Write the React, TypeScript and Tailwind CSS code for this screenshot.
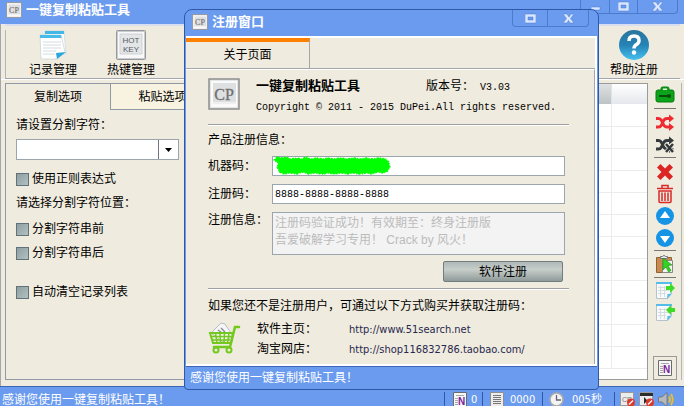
import { useState } from "react";
import type { ReactNode } from "react";
import { clsx } from "clsx";

const rows = Array.from({ length: 12 }, (_, i) => i);

export default function App() {
  const [tab, setTab] = useState("copy");

  return (
    <div className="relative flex min-h-screen flex-col overflow-hidden bg-[#6b9bee] font-['Liberation_Sans','Noto_Sans_CJK_SC',sans-serif] text-xs leading-4 text-black">
      {/* Main window title bar */}
      <header className="flex h-6 items-start justify-between pl-1.5">
        <div className="flex items-center gap-1 pt-0.5">
          <CpLogo className="size-4" />
          <h1 className="text-[13px] font-bold text-white">一键复制粘贴工具</h1>
        </div>
        <div className="mr-1.5 flex h-3.5 rounded-b border border-t-0 border-[#4c7bcb]">
          <WinButton label="最小化" className="w-7">
            <path d="M1 6h9v3H1z" />
          </WinButton>
          <WinButton label="最大化" className="w-7 border-l">
            <path fillRule="evenodd" d="M0 1h11v9H0zM3 4v3h5V4z" />
          </WinButton>
          <WinButton label="关闭" className="w-10 border-l">
            <path d="M0 1h4l2 3 2-3h3L7.500 5.500 11 10H7L5.500 7.500 4 10H0l3.500-4.500z" />
          </WinButton>
        </div>
      </header>

      <main className="flex flex-1 flex-col border-l border-[#a5a5ad] bg-[#efebde]">
        {/* Toolbar */}
        <nav className="mx-1 flex h-[55px] items-start justify-between border-t-2 border-b border-t-[#d7dff0] border-b-[#a5a5ad] pr-[22px] pt-1">
          <div className="flex gap-[30px] border-l border-[#b5b5b5] pl-[23px]">
            <ToolButton label="记录管理">
              <NotesIcon />
            </ToolButton>
            <ToolButton label="热键管理">
              <HotKeyIcon />
            </ToolButton>
          </div>
          <ToolButton label="帮助注册">
            <HelpIcon />
          </ToolButton>
        </nav>

        <div className="flex flex-1 items-stretch border-t border-white pt-[3px] pb-1.5 pl-1">
          {/* Options panel */}
          <section className="flex w-[210px] shrink-0 flex-col border border-t-0 border-[#8f9aa5]">
            <div role="tablist" className="grid grid-cols-2">
              <Tab active={tab === "copy"} onClick={() => setTab("copy")}>复制选项</Tab>
              <Tab active={tab === "paste"} onClick={() => setTab("paste")}>粘贴选项</Tab>
            </div>
            <div className="flex flex-col items-start pl-2.5 pt-[7px]">
              <label htmlFor="separator">请设置分割字符：</label>
              <div className="mt-1.5 grid w-[163px]">
                <select
                  id="separator"
                  className="col-start-1 row-start-1 h-[21px] appearance-none border border-[#9aa5ae] bg-white px-1"
                />
                <span className="pointer-events-none col-start-1 row-start-1 my-px mr-px flex w-5 items-center justify-center justify-self-end border-l border-[#6f7780]">
                  <svg width="7" height="4" aria-hidden="true">
                    <path d="M0 0h7L3.500 4z" />
                  </svg>
                </span>
              </div>
              <div className="mt-[11px]">
                <CheckBox label="使用正则表达式" />
              </div>
              <p className="mt-2">请选择分割字符位置：</p>
              <div className="mt-2.5 flex flex-col gap-2">
                <CheckBox label="分割字符串前" />
                <CheckBox label="分割字符串后" />
              </div>
              <div className="mt-[23px]">
                <CheckBox label="自动清空记录列表" />
              </div>
            </div>
          </section>

          {/* Record list */}
          <section className="ml-1 flex-1 overflow-hidden border border-[#9a9a9a] bg-white">
            <table className="w-full table-fixed border-collapse">
              <thead>
                <tr className="h-5 bg-linear-to-b from-white to-[#e4e7ec]">
                  <th className="bg-linear-to-b from-[#dfe1e2] to-[#bcc3c4]" />
                  <th className="w-9 border-l border-[#dfe3ea]" />
                </tr>
              </thead>
              <tbody>
                {rows.map((row) => (
                  <tr key={row} className="h-[22px] border-b border-[#ececec]">
                    <td />
                    <td className="border-l border-[#ececec]" />
                  </tr>
                ))}
              </tbody>
            </table>
          </section>

          {/* Side actions */}
          <aside className="mr-0.5 flex w-[34px] shrink-0 flex-col items-center border-r border-[#b5b5b5]">
            <SideButton label="工具箱" className="h-6">
              <path fill="#0aa31a" stroke="#087a12" d="M1 7q0-2 2-2h3V3.500Q6 2 7.500 2h5Q14 2 14 3.500V5h3q2 0 2 2v8q0 2-2 2H3q-2 0-2-2z" />
              <path fill="#efebde" d="M8 3.500h4V5H8z" />
              <path fill="none" stroke="#064d0a" strokeWidth="2" d="M4 11h9" />
              <circle cx="14" cy="11" r="2" fill="#064d0a" />
            </SideButton>
            <Divider />
            <SideButton label="随机" className="mt-0.5 h-[22px]">
              <Shuffle color="#ee2b33" />
            </SideButton>
            <SideButton label="取消随机" className="h-[22px]">
              <Shuffle color="#343a3c" />
              <path stroke="#efebde" strokeWidth="4" d="m11 9 7 8m0-8-7 8" />
              <path stroke="#343a3c" strokeWidth="2.500" d="m11 9 7 8m0-8-7 8" />
            </SideButton>
            <Divider />
            <SideButton label="删除" className="mt-0.5 h-[22px]">
              <path fill="#dd2424" d="M2 5.500 5.500 2 10 6.500 14.500 2 18 5.500 13.500 10l4.500 4.500-3.500 3.500-4.500-4.500L5.500 18 2 14.500 6.500 10z" />
            </SideButton>
            <SideButton label="清空" className="h-[22px]">
              <path
                fill="none"
                stroke="#d92a2a"
                strokeWidth="1.500"
                d="M2 4.500h16M7 4V1.500h6V4M4 7v10.500q0 1 1 1h10q1 0 1-1V7zM7 8.500V17M10 8.500V17M13 8.500V17"
              />
            </SideButton>
            <SideButton label="上移" className="h-[22px]">
              <circle cx="10" cy="10" r="9" fill="#1594e6" />
              <path fill="#fff" d="m10 5 5 7H5z" />
            </SideButton>
            <SideButton label="下移" className="h-[22px]">
              <circle cx="10" cy="10" r="9" fill="#1594e6" />
              <path fill="#fff" d="m10 15 5-7H5z" />
            </SideButton>
            <Divider />
            <SideButton label="粘贴" className="h-6">
              <path fill="#c98a50" stroke="#8f6236" d="M1.500 3.500h15v15h-15z" />
              <path fill="#e8e8e8" stroke="#777" d="M5.500 4.500v-2h2Q9 0 10.500 2.500h2v2z" />
              <path fill="#f3f3f3" stroke="#888" d="M7.500 6.500h10v12h-10z" />
              <path fill="#35d31e" stroke="#1d8d10" strokeWidth=".6" d="m8 4 9 7-4 .500 3 5-2.500 1.500-2.500-5L8 16z" />
            </SideButton>
            <Divider />
            <SideButton label="导出" className="h-[22px]">
              <SheetArrow />
              <path fill="#3fdc25" d="M11 6h4V3l5 5-5 5v-3h-4z" />
            </SideButton>
            <SideButton label="导入" className="h-[22px]">
              <SheetArrow />
              <path fill="#3fdc25" d="M20 6h-4V3l-5 5 5 5v-3h4z" />
            </SideButton>
            <button aria-label="记事" className="mt-auto flex size-6 items-center justify-center border border-[#9a9a9a]">
              <NoteIcon />
            </button>
          </aside>
        </div>
      </main>

      {/* Status bar */}
      <footer className="flex h-5 items-center justify-between border-t border-[#3c65b4] pl-0.5 pt-1.5 text-white">
        <p>感谢您使用一键复制粘贴工具！</p>
        <div className="flex items-center pr-2.5">
          <StatusCell className="w-[38px] gap-1 pl-2">
            <NoteIcon />
            <span className="font-['DejaVu_Sans_Condensed','Noto_Sans',sans-serif] text-[11px]">0</span>
          </StatusCell>
          <StatusCell className="w-[60px] gap-1.5 pl-[7px]">
            <LinesIcon />
            <span className="font-['DejaVu_Sans_Condensed','Noto_Sans',sans-serif] text-[11px]">0000</span>
          </StatusCell>
          <StatusCell className="w-[72px] gap-2 pl-1.5">
            <ClockIcon />
            <span className="font-['DejaVu_Sans_Condensed','Noto_Sans_CJK_SC',sans-serif] text-[11px]">005秒</span>
          </StatusCell>
          <StatusCell className="gap-1 pl-[5px]">
            <Blocked>
              <text x="2" y="10" fontSize="7" fill="#777">CP</text>
            </Blocked>
            <Blocked>
              <path fill="#2d2d2d" d="M1 1h13v3H1zM5 5l5 5H7l-2 2z" />
            </Blocked>
            <SpeakerIcon />
          </StatusCell>
        </div>
      </footer>

      <RegisterDialog />
    </div>
  );
}

function RegisterDialog() {
  const [code, setCode] = useState("8888-8888-8888-8888");

  return (
    <div
      role="dialog"
      aria-labelledby="dialog-title"
      className="absolute left-[184px] top-[9px] w-[415px] rounded-t-lg rounded-b border border-[#2f58a8] bg-[#6b9bee] px-px"
    >
      <div className="flex h-[26px] items-start justify-between pl-1.5">
        <div className="flex items-center gap-1 pt-1">
          <CpLogo className="size-4" />
          <h2 id="dialog-title" className="text-[13px] font-bold text-white">注册窗口</h2>
        </div>
        <div className="mr-2 flex h-[17px] rounded-b border border-t-0 border-[#4c7bcb]">
          <WinButton label="最大化" className="w-[34px]">
            <path fillRule="evenodd" d="M0 1h11v9H0zM3 4v3h5V4z" />
          </WinButton>
          <WinButton label="关闭" className="w-[41px] border-l">
            <path d="M0 1h4l2 3 2-3h3L7.500 5.500 11 10H7L5.500 7.500 4 10H0l3.500-4.500z" />
          </WinButton>
        </div>
      </div>

      <div className="border-2 border-white border-l-0 bg-[#efebde]">
        <div className="flex border-b border-[#a5a5ad]">
          <button role="tab" aria-selected className="h-[30px] w-[124px] border-t-4 border-r border-t-[#ff8000] border-r-[#a5a5ad]">
            关于页面
          </button>
        </div>

        <div className="border-t border-r border-t-white border-r-[#a5a5ad] pb-1.5 pl-[22px] pr-[25px]">
          {/* About */}
          <div className="flex gap-4 pt-2">
            <CpLogo className="size-8" />
            <div>
              <p className="flex gap-[66px]">
                <strong className="text-[13px]">一键复制粘贴工具</strong>
                <span>
                  版本号：
                  <span className="ml-1.5 font-['Liberation_Mono',monospace] text-[10px]">V3.03</span>
                </span>
              </p>
              <p className="mt-1 font-['Liberation_Mono',monospace] text-[10px]">
                Copyright © 2011 - 2015 DuPei.All rights reserved.
              </p>
            </div>
          </div>

          <hr className="mt-2 border-t border-[#a0a0a0] border-b border-b-white" />

          {/* Registration */}
          <p className="mt-1.5">产品注册信息：</p>
          <div className="grid grid-cols-[64px_1fr] gap-y-2 pr-1 pt-2">
            <label htmlFor="machine" className="py-0.5">机器码：</label>
            <div className="grid">
              <input id="machine" readOnly className="col-start-1 row-start-1 h-5 min-w-0 border border-[#9aa5ae] bg-white px-0.5" />
              <svg viewBox="0 0 116 20" preserveAspectRatio="none" className="pointer-events-none col-start-1 row-start-1 h-5 w-[122px]" aria-hidden="true">
                <path
                  fill="#00ff00"
                  stroke="#00ff00"
                  strokeWidth="1.500"
                  strokeDasharray="1 1.500 2 1"
                  d="M2 4 5 1l5 1 3-1 5 2 6-1 4 1 5-2 3 2 7-1 5 1 6-1 4 1 8-1 5 1 7-1 6 1 5-1 6 1 7-1 6 1 3 3 1 5-2 4-4 2-6-1-5 2-5-1-7 1-6-1-5 1-6-1-7 1-5-1-6 1-8-1-5 1-6-2-5 2-7-1-6 1-4-2-2-5 1-4z"
                />
              </svg>
            </div>
            <label htmlFor="code" className="py-0.5">注册码：</label>
            <input
              id="code"
              value={code}
              onChange={(e) => setCode(e.target.value)}
              className="h-5 min-w-0 border border-[#9aa5ae] bg-white px-0.5 font-['Liberation_Mono',monospace] text-[10px]"
            />
            <label htmlFor="info">注册信息：</label>
            <textarea
              id="info"
              disabled
              rows={2}
              className="h-[43px] resize-none overflow-hidden border border-[#9aa5ae] bg-[#f3f3f3] px-0.5 py-0.5 leading-[17px] text-[#bcbcbc]"
              value={"注册码验证成功！有效期至：终身注册版\n吾爱破解学习专用！ Crack by 风火！"}
            />
          </div>
          <div className="mt-1.5 flex justify-end pr-1.5">
            <button className="h-[21px] w-[120px] rounded-xs border border-[#727e7e] bg-linear-to-b from-[#aeb8b7] via-[#c7ceca] via-40% to-[#8f9a99]">
              软件注册
            </button>
          </div>

          <hr className="mt-1.5 border-t border-[#a0a0a0] border-b border-b-white" />

          {/* Purchase */}
          <p className="mt-2">如果您还不是注册用户，可通过以下方式购买并获取注册码：</p>
          <div className="mt-[7px] flex gap-4">
            <CartIcon />
            <dl className="grid grid-cols-[92px_auto] gap-y-[3px]">
              <dt>软件主页：</dt>
              <dd>
                <a
                  href="http://www.51search.net"
                  className="font-['DejaVu_Sans_Condensed','Noto_Sans',sans-serif] text-[11px] text-[#27274f]"
                >
                  http://www.51search.net
                </a>
              </dd>
              <dt>淘宝网店：</dt>
              <dd>
                <a
                  href="http://shop116832786.taobao.com/"
                  className="font-['DejaVu_Sans_Condensed','Noto_Sans',sans-serif] text-[11px] text-[#27274f]"
                >
                  http://shop116832786.taobao.com/
                </a>
              </dd>
            </dl>
          </div>
        </div>
      </div>

      <p className="border-t border-[#3c65b4] py-[3px] pl-1 text-white">感谢您使用一键复制粘贴工具！</p>
    </div>
  );
}

// ── Controls ───────────────────────────────────────────────

function WinButton({ label, className, children }: { label: string; className: string; children: ReactNode }) {
  return (
    <button aria-label={label} className={clsx("flex items-center justify-center border-[#4c7bcb]", className)}>
      <svg width="11" height="11" fill="#d8e6ff" stroke="#4c7bcb" strokeWidth=".5">
        {children}
      </svg>
    </button>
  );
}

function ToolButton({ label, children }: { label: string; children: ReactNode }) {
  return (
    <button className="flex flex-col items-center gap-0.5">
      {children}
      {label}
    </button>
  );
}

function Tab({ active, onClick, children }: { active: boolean; onClick: () => void; children: ReactNode }) {
  return (
    <button
      role="tab"
      aria-selected={active}
      onClick={onClick}
      className={clsx(
        "h-[27px] border-t border-[#8f9aa5]",
        active ? "bg-[#efebde]" : "border-b border-l bg-[#f8f2e0]"
      )}
    >
      {children}
    </button>
  );
}

function CheckBox({ label }: { label: string }) {
  return (
    <label className="flex items-center gap-[3px]">
      <input
        type="checkbox"
        className="size-[13px] appearance-none border border-[#60737a] bg-linear-to-br from-[#8fa0a2] to-[#b3c0c0] checked:bg-[#3f6f78]"
      />
      {label}
    </label>
  );
}

function SideButton({ label, className, children }: { label: string; className: string; children: ReactNode }) {
  return (
    <button aria-label={label} className={clsx("flex shrink-0 items-center justify-center", className)}>
      <svg width="20" height="20">
        {children}
      </svg>
    </button>
  );
}

function Divider() {
  return <hr className="my-px w-[22px] border-[#777]" />;
}

function StatusCell({ className, children }: { className: string; children: ReactNode }) {
  return <div className={clsx("flex items-center border-l border-[#2f58a8]", className)}>{children}</div>;
}

// ── Icons ──────────────────────────────────────────────────

function CpLogo({ className }: { className: string }) {
  return (
    <svg viewBox="0 0 32 32" className={clsx("shrink-0", className)} aria-hidden="true">
      <path fill="#e4e4e4" stroke="#8f8f8f" strokeWidth="1.500" d="M1 1h30v30H1z" />
      <path fill="#fafafa" d="M3 3h26v26H3z" />
      <path fill="#dedfe1" d="M5 5h23v21H5z" />
      <path fill="#efefef" d="M5 24h23v2H5z" />
      <text x="16" y="22" textAnchor="middle" fontSize="16" fill="#6f6f6f" stroke="#6f6f6f" strokeWidth=".3" className="font-['Liberation_Serif',serif]">
        CP
      </text>
    </svg>
  );
}

function NotesIcon() {
  return (
    <svg width="30" height="30" aria-hidden="true">
      <path fill="#fbfdff" stroke="#c9d5da" strokeWidth=".7" d="M7 1h19l2 23H8z" />
      <path fill="#42b6e4" d="M7 1h19v3H7z" />
      <path fill="#fff" stroke="#c4d0d6" strokeWidth=".7" d="M2 5h21l4 17-7 7H3z" />
      <path fill="#48bce9" d="M2 5h21l.500 3H2z" />
      <path stroke="#d6dcdf" d="M5 12h18M5 15h18M5 18h18M5 21h13M5 24h12" />
      <path fill="#2aa7dc" d="m19 29-1-6 10-1z" />
    </svg>
  );
}

function HotKeyIcon() {
  return (
    <svg width="30" height="30" aria-hidden="true">
      <rect x=".5" y=".5" width="29" height="29" rx="1" fill="#c9cbce" stroke="#94979b" />
      <path fill="#f8f8f8" d="M2 2h26v26H2z" />
      <path fill="#e3e5e7" stroke="#c3c6ca" strokeWidth=".7" d="M4 4h22v20H4z" />
      <g textAnchor="middle" fontSize="8" fill="#55595d">
        <text x="15" y="13">HOT</text>
        <text x="15" y="22">KEY</text>
      </g>
    </svg>
  );
}

function HelpIcon() {
  return (
    <svg width="32" height="30" aria-hidden="true">
      <defs>
        <linearGradient id="help" x2="0" y2="1">
          <stop stopColor="#2a759e" />
          <stop offset=".5" stopColor="#2583b5" />
          <stop offset="1" stopColor="#47c0ee" />
        </linearGradient>
      </defs>
      <circle cx="16" cy="15" r="15" fill="url(#help)" />
      <path fill="none" stroke="#fff" strokeWidth="3.500" d="M11 11q0-5 5-5t5 4.500q0 2.500-2.500 4T16 18.500" />
      <circle cx="16" cy="22.500" r="2.200" fill="#fff" />
    </svg>
  );
}

function Shuffle({ color }: { color: string }) {
  return (
    <>
      <path
        fill="none"
        stroke={color}
        strokeWidth="2.800"
        d="M1 5.500h2.500q2 0 3 2l2 4q1 2.500 3.500 2.500h3M1 14h2.500q2 0 3-2l2-4q1-2.500 3.500-2.500h3"
      />
      <path fill={color} d="m14 1.500 5 4-5 4zM14 10l5 4-5 4z" />
    </>
  );
}

function SheetArrow() {
  return (
    <>
      <path fill="#f7f9fa" stroke="#b6c4ca" d="M1.500 2.500h15v11l-4 5h-11z" />
      <path fill="#56bde8" d="M1 2h16v2H1zM12 19l.500-5 4.500-.500z" />
      <path stroke="#d5dcdf" d="M3 7.500h11M3 10.500h11M3 13.500h8M5.500 6v11M9.500 6v11" />
    </>
  );
}

function NoteIcon() {
  return (
    <svg width="14" height="16" className="shrink-0" aria-hidden="true">
      <path fill="#f6f6f6" stroke="#6b6b6b" d="M.500.500h13v15H.500z" />
      <path stroke="#a9a9a9" d="M3 3.500h8M2 6.500h3M2 8.500h3M2 10.500h3M2 12.500h3" />
      <text x="5" y="13" fontSize="10" fontWeight="bold" fill="#7a1f9c">N</text>
    </svg>
  );
}

function LinesIcon() {
  return (
    <svg width="14" height="15" className="shrink-0" aria-hidden="true">
      <path fill="#ececec" stroke="#8f8f8f" d="M.500.500h13v14H.500z" />
      <path stroke="#777" d="M3 3.500h8M3 5.500h8M3 7.500h8M3 9.500h8M3 11.500h8" />
    </svg>
  );
}

function ClockIcon() {
  return (
    <svg width="15" height="15" className="shrink-0" aria-hidden="true">
      <circle cx="7.500" cy="7.500" r="6.500" fill="#f4f4f4" stroke="#aaa" strokeWidth="1.500" />
      <path fill="none" stroke="#667" strokeWidth="1.300" d="M7.500 3v5H12" />
    </svg>
  );
}

function Blocked({ children }: { children: ReactNode }) {
  return (
    <svg width="15" height="15" className="shrink-0" aria-hidden="true">
      <path fill="#ececec" stroke="#9a9a9a" d="M.500.500h13v13H.500z" />
      {children}
      <circle cx="11" cy="10.500" r="4" fill="#dd3a2c" />
      <path stroke="#fff" strokeWidth="1.200" d="m9 12.500 4-4" />
    </svg>
  );
}

function SpeakerIcon() {
  return (
    <svg width="16" height="15" className="shrink-0" aria-hidden="true">
      <path fill="#b9b9b9" stroke="#666" strokeWidth=".7" d="M.500 5H4l5-4.500v14L4 10H.500z" />
      <path fill="none" stroke="#f0c020" strokeWidth="1.800" d="M11 4.500q2 3 0 6M13 2q3.500 5.500 0 11" />
    </svg>
  );
}

function CartIcon() {
  return (
    <svg width="33" height="34" aria-hidden="true">
      <path fill="#f5f5f5" stroke="#b9bcc0" d="m3 12 10-10 4 1 8 12-10 6z" />
      <path fill="none" stroke="#858a90" strokeWidth="1.300" d="m10 9 4 3m-1-5 4 4" />
      <g fill="none" stroke="#74c91e" strokeWidth="2">
        <path strokeLinecap="round" d="M31 6h-4l-5 20H6" strokeWidth="2.500" />
        <path d="M2 12h23l-2 10H5z" />
        <path strokeWidth="1.500" d="M3 15.500h20M4 19h18M7.500 12l1.500 10M12 12l.500 10M16.500 12 16 22M21 12l-1.500 10" />
        <circle cx="8" cy="29" r="2.500" />
        <circle cx="21" cy="29" r="2.500" />
      </g>
    </svg>
  );
}
